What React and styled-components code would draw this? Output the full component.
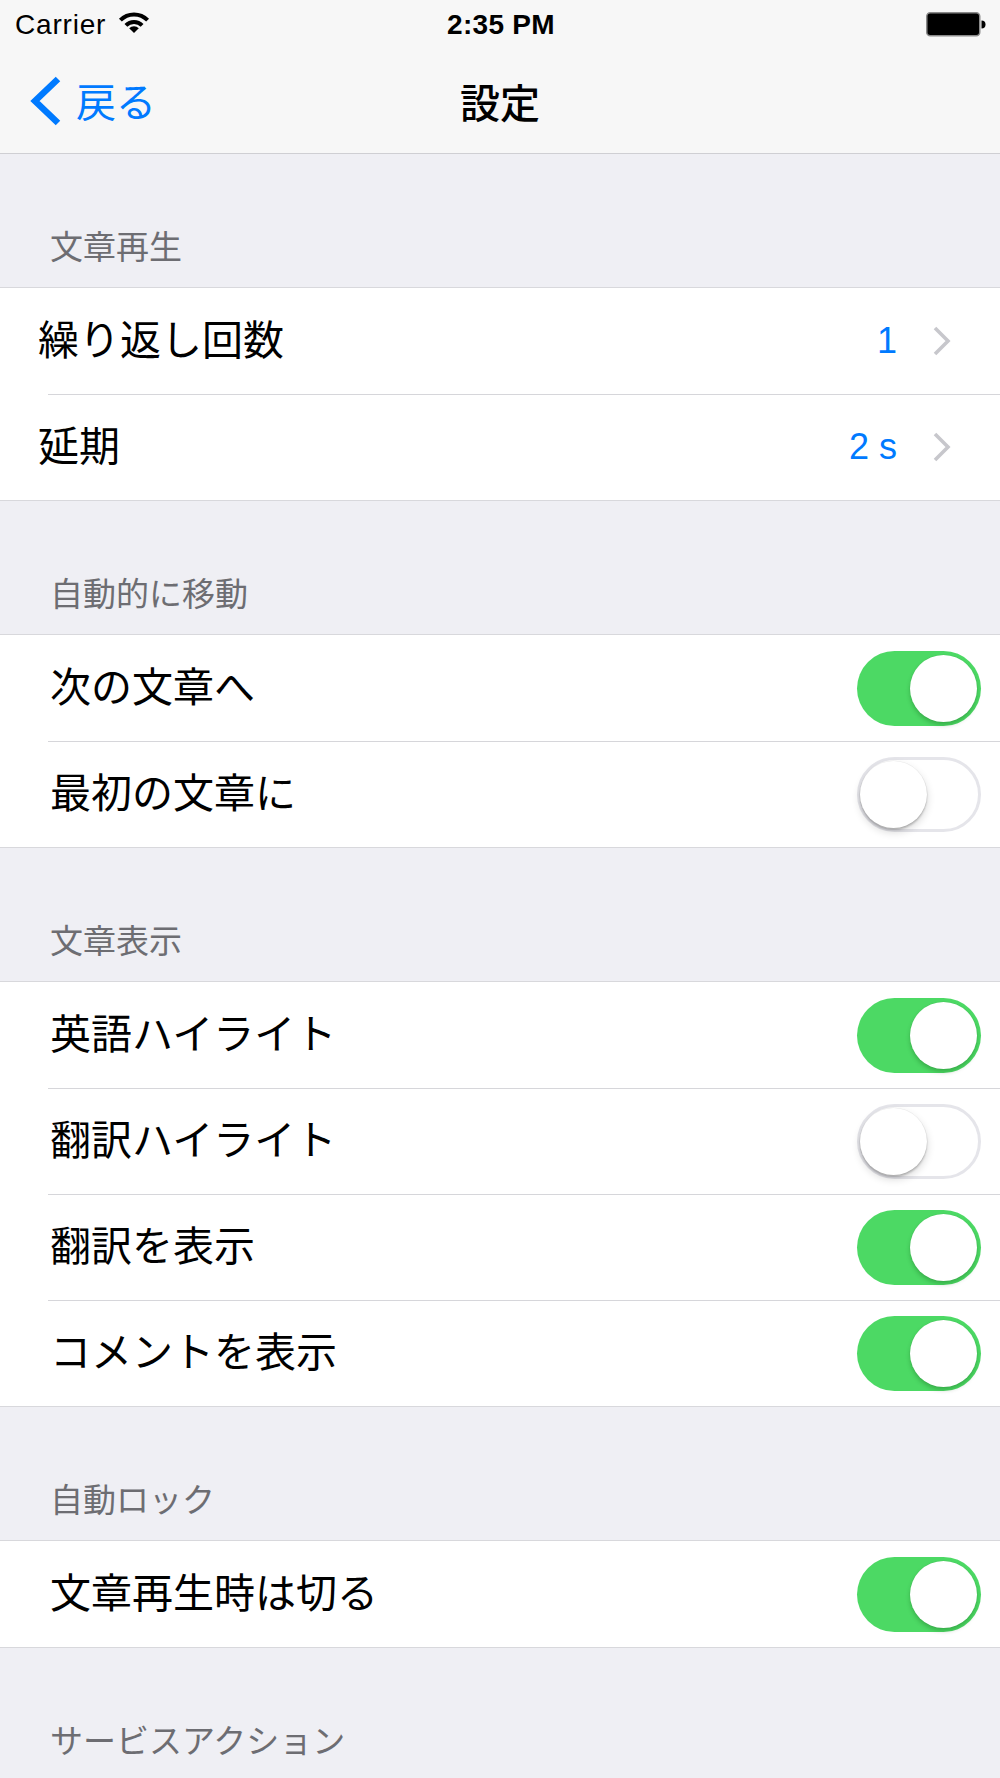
import React, { useState } from "react";
import styled, { createGlobalStyle } from "styled-components";

const GlobalStyle = createGlobalStyle`
  body {
    margin: 0;
    background: #efeff4;
    font-family: "Liberation Sans", "Noto Sans CJK JP", sans-serif;
    -webkit-font-smoothing: antialiased;
  }
`;

const sections = [
  {
    title: "文章再生",
    indent: 38,
    rows: [
      { label: "繰り返し回数", value: "1" },
      { label: "延期", value: "2 s" },
    ],
  },
  {
    title: "自動的に移動",
    rows: [
      { label: "次の文章へ", on: true },
      { label: "最初の文章に", on: false },
    ],
  },
  {
    title: "文章表示",
    rows: [
      { label: "英語ハイライト", on: true },
      { label: "翻訳ハイライト", on: false },
      { label: "翻訳を表示", on: true },
      { label: "コメントを表示", on: true },
    ],
  },
  {
    title: "自動ロック",
    rows: [{ label: "文章再生時は切る", on: true }],
  },
  { title: "サービスアクション", rows: [] },
];

function WifiIcon() {
  return (
    <svg width="32" height="21" viewBox="0 0 32 21">
      <path d="M2.4 8.2 A19 19 0 0 1 29.6 8.2" fill="none" stroke="#000" strokeWidth="4" />
      <path d="M7.9 13.4 A11.5 11.5 0 0 1 24.1 13.4" fill="none" stroke="#000" strokeWidth="4" />
      <path d="M16 21 L11.2 16.2 A6.8 6.8 0 0 1 20.8 16.2 Z" fill="#000" />
    </svg>
  );
}

function BatteryIcon() {
  return (
    <svg width="61" height="25" viewBox="0 0 61 25">
      <rect x="0.75" y="0.75" width="53" height="23" rx="3.5" fill="#000" stroke="#8a8a8a" strokeWidth="1.5" />
      <path d="M55.5 8.5 A4 4 0 0 1 55.5 16.5 Z" fill="#000" />
    </svg>
  );
}

function BackChevron() {
  return (
    <svg width="32" height="50" viewBox="0 0 32 50">
      <polyline points="28,3 5,25 28,47" fill="none" stroke="#007aff" strokeWidth="6.5" strokeLinejoin="miter" />
    </svg>
  );
}

function Disclosure() {
  return (
    <svg width="18" height="30" viewBox="0 0 18 30">
      <polyline points="2,2 15,15 2,28" fill="none" stroke="#c7c7cc" strokeWidth="3.6" />
    </svg>
  );
}

function Switch({ initial }) {
  const [on, setOn] = useState(initial);
  return (
    <Track $on={on} onClick={() => setOn(!on)}>
      <Knob $on={on} />
    </Track>
  );
}

export default function App() {
  return (
    <Screen>
      <GlobalStyle />
      <StatusBar>
        <Carrier>
          Carrier
          <WifiIcon />
        </Carrier>
        <Clock>2:35 PM</Clock>
        <Battery>
          <BatteryIcon />
        </Battery>
      </StatusBar>
      <NavBar>
        <BackButton>
          <BackChevron />
          <span>戻る</span>
        </BackButton>
        <NavTitle>設定</NavTitle>
        <span />
      </NavBar>

      {sections.map((section) => (
        <React.Fragment key={section.title}>
          <SectionHeader>{section.title}</SectionHeader>
          {section.rows.length > 0 && (
            <Group>
              {section.rows.map((row) => (
                <Row key={row.label} $indent={section.indent || 50} $detail={row.value !== undefined}>
                  <Label>{row.label}</Label>
                  {row.value !== undefined ? (
                    <Detail>
                      <Value>{row.value}</Value>
                      <Disclosure />
                    </Detail>
                  ) : (
                    <Switch initial={row.on} />
                  )}
                </Row>
              ))}
            </Group>
          )}
        </React.Fragment>
      ))}
    </Screen>
  );
}

const Screen = styled.div`
  width: 1000px;
  min-height: 1778px;
  background: #efeff4;
  overflow: hidden;
`;

const StatusBar = styled.div`
  height: 48px;
  display: grid;
  grid-template-columns: 1fr auto 1fr;
  align-items: center;
  padding: 0 13px 0 15px;
  background: #f7f7f7;
  color: #000;
`;

const Carrier = styled.div`
  display: flex;
  align-items: center;
  gap: 12px;
  font-size: 28px;
  letter-spacing: 0.8px;
  line-height: 32px;
  padding-top: 2px;
  svg {
    margin-top: -6px;
  }
`;

const Clock = styled.div`
  font-size: 28px;
  font-weight: bold;
  letter-spacing: 0.3px;
  line-height: 32px;
  padding-top: 2px;
`;

const Battery = styled.div`
  justify-self: end;
  display: flex;
`;

const NavBar = styled.div`
  height: 105px;
  display: grid;
  grid-template-columns: 1fr auto 1fr;
  align-items: center;
  background: #f7f7f7;
  border-bottom: 1px solid #cfcfd3;
`;

const BackButton = styled.div`
  display: flex;
  align-items: center;
  gap: 14px;
  padding-left: 30px;
  color: #007aff;
  font-family: "Noto Sans CJK JP", sans-serif;
  font-size: 40px;
  line-height: 50px;
  span {
    margin-top: -2px;
  }
`;

const NavTitle = styled.div`
  font-family: "Noto Sans CJK JP", sans-serif;
  font-size: 40px;
  font-weight: 500;
  line-height: 50px;
  color: #000;
`;

const SectionHeader = styled.div`
  height: 133px;
  box-sizing: border-box;
  display: flex;
  align-items: flex-end;
  padding: 0 50px 21px;
  color: #6d6d72;
  font-size: 33px;
  line-height: 36px;
`;

const Group = styled.div`
  background: #fff;
  border-top: 1px solid #d8d8dc;
  border-bottom: 1px solid #d8d8dc;
`;

const Row = styled.div`
  position: relative;
  height: 106px;
  display: flex;
  align-items: center;
  justify-content: space-between;
  padding-left: ${(p) => p.$indent}px;
  padding-right: ${(p) => (p.$detail ? 49 : 19)}px;

  & + &::before {
    content: "";
    position: absolute;
    top: 0;
    left: 48px;
    right: 0;
    height: 1px;
    background: #d6d6da;
  }
`;

const Label = styled.div`
  font-size: 41px;
  line-height: 50px;
  color: #000;
`;

const Detail = styled.div`
  display: flex;
  align-items: center;
  gap: 36px;
`;

const Value = styled.div`
  font-size: 36px;
  line-height: 40px;
  color: #007aff;
`;

const Track = styled.div`
  width: 124px;
  height: 75px;
  box-sizing: border-box;
  border-radius: 38px;
  display: flex;
  align-items: center;
  justify-content: ${(p) => (p.$on ? "flex-end" : "flex-start")};
  padding: ${(p) => (p.$on ? "0 4px" : "0")};
  background: ${(p) => (p.$on ? "#4cd964" : "#fff")};
  border: ${(p) => (p.$on ? "none" : "3px solid #e5e5ea")};
  cursor: pointer;
`;

const Knob = styled.div`
  width: 67px;
  height: 67px;
  border-radius: 50%;
  background: #fff;
  box-shadow: ${(p) =>
    p.$on
      ? "0 3px 4px rgba(0, 60, 0, 0.25), 0 0 0 0.5px rgba(0, 0, 0, 0.05)"
      : "0 4px 8px rgba(0, 0, 0, 0.16), 0 2px 2px rgba(0, 0, 0, 0.2), 0 0 0 0.5px rgba(0, 0, 0, 0.06)"};
`;
